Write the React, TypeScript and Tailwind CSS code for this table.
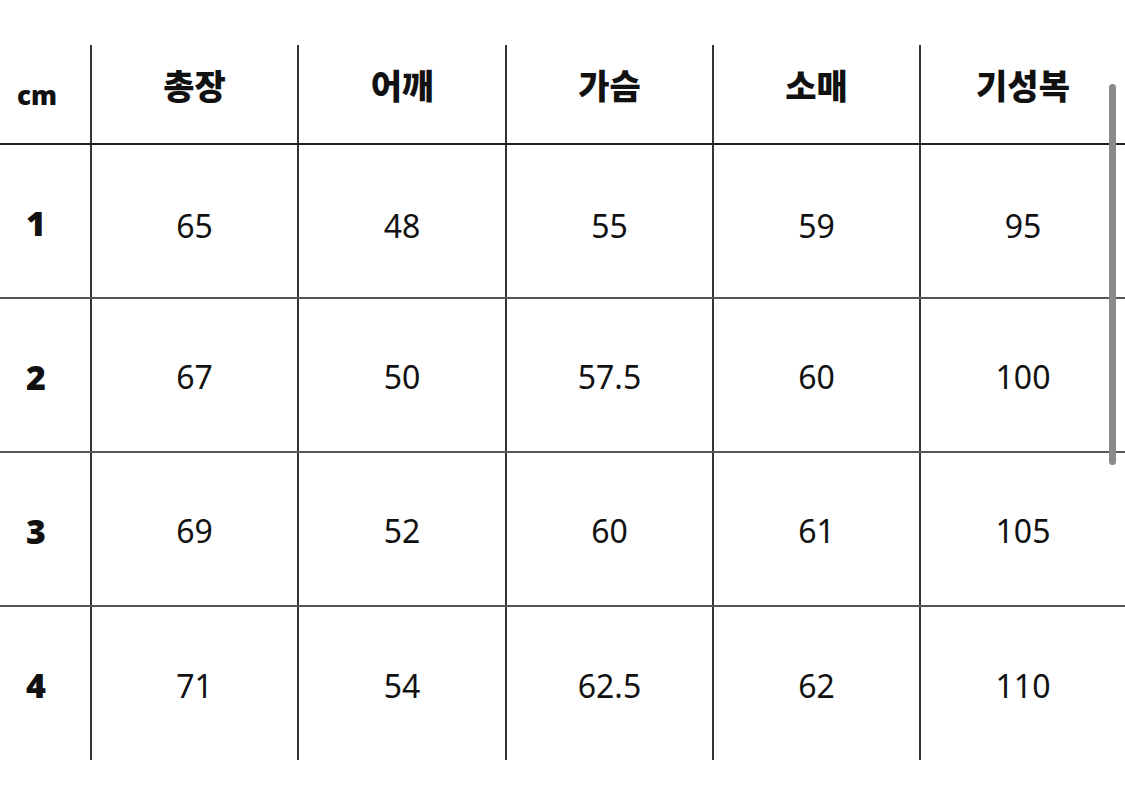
import React from 'react';

const headers = ['총장', '어깨', '가슴', '소매', '기성복'];

const rows = [
  { size: '1', values: ['65', '48', '55', '59', '95'] },
  { size: '2', values: ['67', '50', '57.5', '60', '100'] },
  { size: '3', values: ['69', '52', '60', '61', '105'] },
  { size: '4', values: ['71', '54', '62.5', '62', '110'] },
];

const gridCols = 'grid grid-cols-[90px_207px_208px_207px_207px_1fr]';

const App = () => {
  return (
    <div className="relative w-[1125px] h-[801px] overflow-hidden bg-white font-['Noto_Sans','Noto_Sans_CJK_KR',sans-serif] text-[#111]">
      <div className="pt-[45px]">
        {/* header */}
        <div className={`${gridCols} h-[100px] border-b-2 border-[#222]`}>
          <div className="flex items-center justify-center pr-[16px] pt-[2px] text-[26px] font-black">cm</div>
          {headers.map(h => (
            <div
              key={h}
              className="flex items-center justify-center border-l-2 border-[#333] pb-[20px] text-[34px] font-black font-['Noto_Sans_CJK_KR',sans-serif]"
            >
              {h}
            </div>
          ))}
        </div>

        {rows.map((row, i) => (
          <div
            key={row.size}
            className={`${gridCols} ${i === rows.length - 1 ? 'h-[153px]' : 'h-[154px] border-b-2 border-[#555]'}`}
          >
            <div className="flex items-center justify-center pr-[18px] pt-[4px] text-[34px] font-black">
              {row.size}
            </div>
            {row.values.map((v, j) => (
              <div
                key={j}
                className={`flex items-center justify-center border-l-2 border-[#333] text-[32px] ${i === 0 ? 'pt-[10px]' : 'pt-[4px]'}`}
              >
                {v}
              </div>
            ))}
          </div>
        ))}
      </div>

      {/* scrollbar */}
      <div className="absolute left-[1109px] top-[84px] w-[7px] h-[381px] rounded-full bg-[#8a8a8a]" />
    </div>
  );
};

export default App;
